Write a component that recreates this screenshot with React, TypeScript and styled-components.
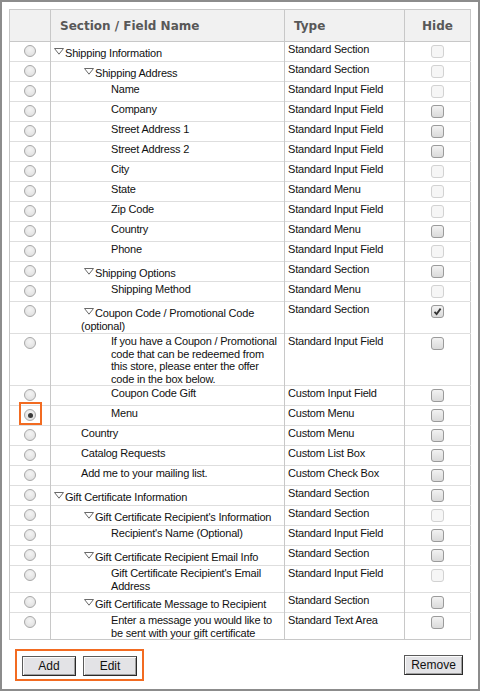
import styled, { createGlobalStyle } from "styled-components";

const GlobalStyle = createGlobalStyle`
  body {
    margin: 0;
    background: #fff;
    font-family: "Liberation Sans", Arial, sans-serif;
  }
`;

const Frame = styled.div`
  box-sizing: border-box;
  width: 480px;
  height: 691px;
  border: 2px solid #8c8c8c;
  padding: 7px 8px 0 7px;
`;

const Table = styled.table`
  width: 461px;
  border-collapse: collapse;
  border: 1px solid #c8c8c8;
  table-layout: fixed;
`;

const HeadCell = styled.th<{ $align?: string }>`
  height: 31px;
  padding: 0 0 0 ${(p) => (p.$align === "center" ? 0 : 9)}px;
  background: #f1f1f1;
  border: 1px solid #c8c8c8;
  text-align: ${(p) => p.$align || "left"};
  font-family: "DejaVu Sans", Verdana, sans-serif;
  font-size: 12px;
  font-weight: bold;
  color: #585858;
`;

const Row = styled.tr`
  height: 20px;
  border-top: 1px solid #dedede;
`;

const Cell = styled.td`
  padding: 1px 3px 0 3px;
  vertical-align: top;
  border-left: 1px solid #c8c8c8;
  font-size: 11px;
  line-height: 12.5px;
  letter-spacing: -0.2px;
  color: #111;
`;

const RadioCell = styled(Cell)`
  position: relative;
  padding: 3px 0 0;
  text-align: center;
`;

const HideCell = styled(Cell)`
  padding: 3px 0 0;
  text-align: center;
`;

const NameCell = styled(Cell)<{ $level: number; $section?: boolean }>`
  padding-left: ${(p) => p.$level * 30}px;
  padding-top: ${(p) => (p.$section ? 5 : 1)}px;
  line-height: ${(p) => (p.$section ? 13 : 12.5)}px;
  white-space: pre;
`;

const Radio = styled.span<{ $on?: boolean }>`
  display: inline-block;
  box-sizing: border-box;
  width: 12px;
  height: 12px;
  border-radius: 50%;
  border: 1px solid #a9a9a9;
  background: radial-gradient(circle at 50% 35%, #f4f4f4 0%, #dcdcdc 100%);
  position: relative;
  vertical-align: top;

  &::after {
    content: "";
    display: ${(p) => (p.$on ? "block" : "none")};
    position: absolute;
    left: 2.5px;
    top: 2.5px;
    width: 5px;
    height: 5px;
    border-radius: 50%;
    background: #3a3a3a;
  }
`;

const Highlight = styled.span`
  position: absolute;
  left: 9px;
  top: -4px;
  width: 19px;
  height: 19px;
  border: 2px solid #f26b21;
`;

const Check = styled.span<{ $state: string }>`
  display: inline-block;
  box-sizing: border-box;
  width: 13px;
  height: 13px;
  border-radius: 3px;
  vertical-align: top;
  border: 1px solid ${(p) => (p.$state === "d" ? "#d2d2d2" : "#9a9a9a")};
  background: ${(p) =>
    p.$state === "d" ? "#f6f6f6" : "linear-gradient(#f2f2f2, #dadada)"};
  position: relative;

  svg {
    position: absolute;
    left: 1px;
    top: 1px;
  }
`;

const Tri = styled.svg`
  display: inline-block;
  vertical-align: top;
  margin: 1px 1px 0 3px;
`;

const Footer = styled.div`
  display: flex;
  justify-content: space-between;
  align-items: flex-start;
  padding: 9px 7px 0 6px;
`;

const ButtonGroup = styled.div`
  display: flex;
  gap: 7px;
  padding: 5px 5px 3px 5px;
  border: 2px solid #f26b21;
`;

const Button = styled.button<{ $w: number }>`
  box-sizing: border-box;
  width: ${(p) => p.$w}px;
  height: 20px;
  margin-top: ${(p) => (p.$w > 56 ? 6 : 0)}px;
  padding: 0;
  font-family: "Liberation Sans", Arial, sans-serif;
  font-size: 12px;
  color: #111;
  background: #e3e3e6;
  border: 1px solid #5a5a5a;
  border-right-color: #2a2a2a;
  border-bottom-color: #2a2a2a;
  box-shadow: inset 1px 1px #fbfbfb, inset -1px -1px #a0a0a0;
`;

type Item = {
  s?: boolean;
  l: number;
  n: string;
  t: string;
  h: "d" | "o" | "c";
  sel?: boolean;
};

const rows: Item[] = [
  { s: true, l: 0, n: "Shipping Information", t: "Standard Section", h: "d" },
  { s: true, l: 1, n: "Shipping Address", t: "Standard Section", h: "d" },
  { l: 2, n: "Name", t: "Standard Input Field", h: "d" },
  { l: 2, n: "Company", t: "Standard Input Field", h: "o" },
  { l: 2, n: "Street Address 1", t: "Standard Input Field", h: "o" },
  { l: 2, n: "Street Address 2", t: "Standard Input Field", h: "o" },
  { l: 2, n: "City", t: "Standard Input Field", h: "d" },
  { l: 2, n: "State", t: "Standard Menu", h: "d" },
  { l: 2, n: "Zip Code", t: "Standard Input Field", h: "d" },
  { l: 2, n: "Country", t: "Standard Menu", h: "o" },
  { l: 2, n: "Phone", t: "Standard Input Field", h: "d" },
  { s: true, l: 1, n: "Shipping Options", t: "Standard Section", h: "o" },
  { l: 2, n: "Shipping Method", t: "Standard Menu", h: "d" },
  {
    s: true,
    l: 1,
    n: "Coupon Code / Promotional Code\n(optional)",
    t: "Standard Section",
    h: "c",
  },
  {
    l: 2,
    n: "If you have a Coupon / Promotional\ncode that can be redeemed from\nthis store, please enter the offer\ncode in the box below.",
    t: "Standard Input Field",
    h: "o",
  },
  { l: 2, n: "Coupon Code Gift", t: "Custom Input Field", h: "o" },
  { l: 2, n: "Menu", t: "Custom Menu", h: "o", sel: true },
  { l: 1, n: "Country", t: "Custom Menu", h: "o" },
  { l: 1, n: "Catalog Requests", t: "Custom List Box", h: "o" },
  { l: 1, n: "Add me to your mailing list.", t: "Custom Check Box", h: "o" },
  { s: true, l: 0, n: "Gift Certificate Information", t: "Standard Section", h: "o" },
  { s: true, l: 1, n: "Gift Certificate Recipient's Information", t: "Standard Section", h: "d" },
  { l: 2, n: "Recipient's Name (Optional)", t: "Standard Input Field", h: "o" },
  { s: true, l: 1, n: "Gift Certificate Recipient Email Info", t: "Standard Section", h: "o" },
  {
    l: 2,
    n: "Gift Certificate Recipient's Email\nAddress",
    t: "Standard Input Field",
    h: "d",
  },
  { s: true, l: 1, n: "Gift Certificate Message to Recipient", t: "Standard Section", h: "o" },
  {
    l: 2,
    n: "Enter a message you would like to\nbe sent with your gift certificate",
    t: "Standard Text Area",
    h: "o",
  },
];

const Triangle = () => (
  <Tri width="10" height="7" viewBox="0 0 10 7">
    <polygon points="0.5,0.5 9.5,0.5 5,6.2" fill="#fff" stroke="#6a6a6a" strokeWidth="1" />
  </Tri>
);

export default function App() {
  return (
    <Frame>
      <GlobalStyle />
      <Table>
        <colgroup>
          <col style={{ width: 41 }} />
          <col style={{ width: 234 }} />
          <col style={{ width: 120 }} />
          <col style={{ width: 66 }} />
        </colgroup>
        <thead>
          <tr>
            <HeadCell />
            <HeadCell>Section / Field Name</HeadCell>
            <HeadCell>Type</HeadCell>
            <HeadCell $align="center">Hide</HeadCell>
          </tr>
        </thead>
        <tbody>
          {rows.map((r, i) => (
            <Row key={i}>
              <RadioCell>
                <Radio $on={r.sel} />
                {r.sel && <Highlight />}
              </RadioCell>
              <NameCell $level={r.l} $section={r.s}>
                {r.s && <Triangle />}
                {r.n}
              </NameCell>
              <Cell>{r.t}</Cell>
              <HideCell>
                <Check $state={r.h}>
                  {r.h === "c" && (
                    <svg width="9" height="9" viewBox="0 0 9 9">
                      <path d="M1.5 4.8 L3.6 7 L7.6 1.6" fill="none" stroke="#333" strokeWidth="1.8" />
                    </svg>
                  )}
                </Check>
              </HideCell>
            </Row>
          ))}
        </tbody>
      </Table>
      <Footer>
        <ButtonGroup>
          <Button $w={54}>Add</Button>
          <Button $w={54}>Edit</Button>
        </ButtonGroup>
        <Button $w={59}>Remove</Button>
      </Footer>
    </Frame>
  );
}
